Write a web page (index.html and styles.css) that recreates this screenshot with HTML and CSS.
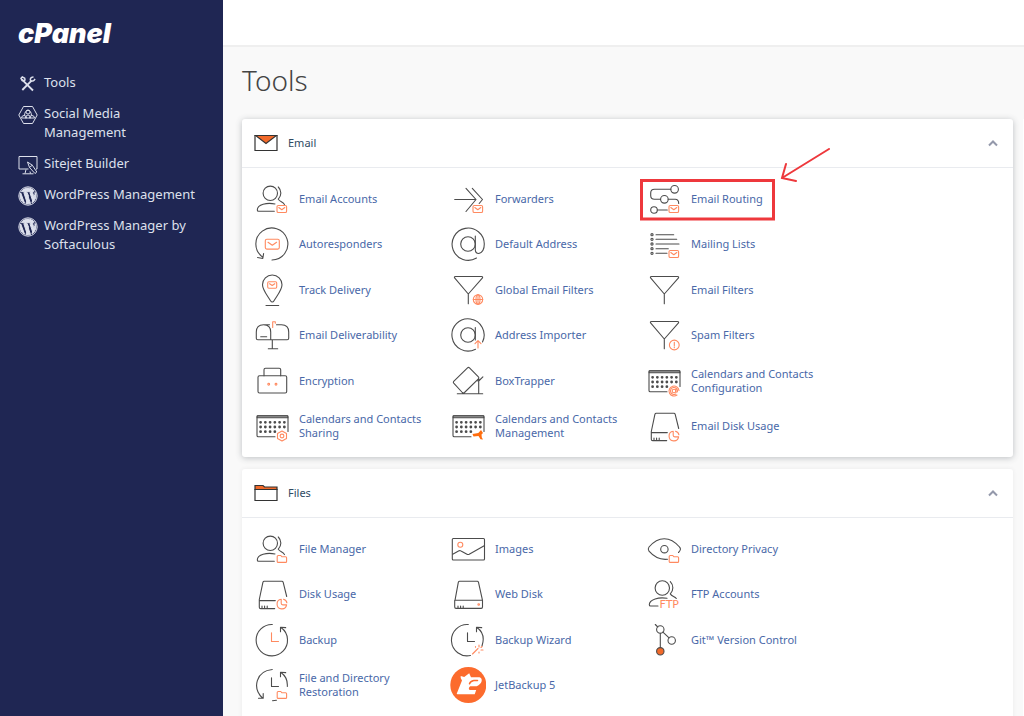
FILE: index.html
```html
<!DOCTYPE html>
<html lang="en">
<head>
<meta charset="utf-8">
<title>cPanel - Tools</title>
<link rel="stylesheet" href="styles.css">
</head>
<body>
<svg class="sprite" aria-hidden="true">
  <symbol id="b-mail" viewBox="0 0 36 36"><g class="accent"><rect x="23" y="24.5" width="9.6" height="7" rx="1.3"/><path d="M24.8 26.5l3 2.2 3-2.2"/></g></symbol>
  <symbol id="b-folder" viewBox="0 0 36 36"><path class="accent" d="M23.2 25.5q0-1 1-1h2.6l1.2 1.3h3.6q1 0 1 1v3.6q0 1-1 1h-7.4q-1 0-1-1z"/></symbol>
  <symbol id="b-pie" viewBox="0 0 36 36"><path class="accent" d="M27.2 23.3a4.8 4.8 0 1 0 5.4 5.6h-3.8q-1.6 0-1.6-1.6zM29.5 23.2q3 .8 3.4 3.6"/></symbol>
  <symbol id="user" viewBox="0 0 36 36"><circle cx="16.3" cy="12.3" r="7.2"/><path d="M24.3 6c3.4 3.5 3.4 8.5 0 12.2c1.6 2.6 5 2.6 6.2 5.4M21 23c-8-1.7-17.7.5-17.7 6q0 1.3 1.3 1.3h15.7"/></symbol>
  <symbol id="funnel" viewBox="0 0 36 36"><path d="M5.5 4.5h26q1.6 0 1 1.4L18.3 22 4.6 5.900q-.7-1.400.9-1.400zM18.300 22v9.800"/></symbol>
  <symbol id="calendar" viewBox="0 0 36 36"><path d="M21 28.7H4.3q-1.3 0-1.3-1.3V9q0-1.3 1.3-1.3h28.4Q34 7.7 34 9v14.5"/><path fill="#999" d="M3.200 7.700h30.600v2H3.200z"/><path class="dots" d="M6.600 14.300h24M6.600 19h24M6.600 23.700h16"/></symbol>
  <symbol id="disk" viewBox="0 0 36 36"><path d="M32.700 20.500L29.200 6.300q-.3-1-1.300-1H10.200q-1 0-1.300 1L5.300 23.500v7.700q0 1.400 1.400 1.400h14M5.300 24.600h16M8 30v2M10.600 30v2M13.200 30v2"/></symbol>
  <symbol id="wp" viewBox="0 0 20 20"><circle cx="10" cy="10" r="9.200" fill="none" stroke="currentColor" stroke-width="1"/><path fill="currentColor" d="M3.300 5.600a8 8 0 0 1 13 -.5c-1.600 0-2 1.800-1 3.400 1 1.700.8 2.700.3 4.300l-.8 2.500-2.900-8.700 1-.1v-.8H8.300v.8l.9.100 1.300 3.500-1.800 5.300L5.800 6.600l1-.1v-.8zM2.700 6.800l3.900 10.500A8 8 0 0 1 2.700 6.800zM10.200 10.900l2.300 6.600a8 8 0 0 1-4.600.2zM17.100 6.300a8 8 0 0 1-3.200 10.500c1.600-4.700 3.400-7.600 3.200-10.500z"/></symbol>
</svg>
<div class="app">
  <aside class="sidebar">
    <a class="logo" href="#">cPanel</a>
    <nav class="nav">
      <a href="#"><svg viewBox="0 0 20 20"><path d="M6.800 8.300L15 16.500M7.300 8.800L3.900 5.400M13.300 6.800L4.300 16" stroke-width="1.900"/><path d="M3 4.300l1.300-1.300 2.400 1.200.3 1.700-1.100 1.100-1.700-.4zM14 7.300q-2-.3-1.600-2.300T15.500 3M13.200 6.700q2.200 1.300 3.800-1.900" stroke-width="1.500"/></svg><span>Tools</span></a>
      <a href="#"><svg viewBox="0 0 20 20"><path d="M5.500 1.500h9l4.700 8.500-4.700 8.500h-9L.8 10z"/><circle cx="10" cy="7" r="2"/><path d="M6.500 10.500q.3-5 3.500-5.200 3.200.2 3.500 5.200M3.500 13q.2-2.500 2.500-2.500T8.500 13zM7.500 13q.2-3 2.500-3t2.500 3zM11.500 13q.2-2.500 2.500-2.500t2.500 2.500z"/></svg><span>Social Media Management</span></a>
      <a href="#"><svg viewBox="0 0 20 20"><path d="M10.500 14H1V1.500h18V14h-1M4.500 18.800h11M7 18.500l1-4M12.500 18.500l-.5-2M9.500 7l2 5.500 5.500 6 1.800-1.500-4.500-6.800zM11.500 12.500l2.800-2.300"/></svg><span>Sitejet Builder</span></a>
      <a href="#"><svg viewBox="0 0 20 20"><use href="#wp"/></svg><span>WordPress Management</span></a>
      <a href="#"><svg viewBox="0 0 20 20"><use href="#wp"/></svg><span>WordPress Manager by Softaculous</span></a>
    </nav>
  </aside>
  <div class="page">
    <header class="topbar"></header>
    <main class="content">
      <h1>Tools</h1>
      <div class="columns">
      <div class="cards">
      <section class="card card-raised">
        <header class="card-head">
          <svg viewBox="0 0 24 18"><path fill="#fff" d="M1 1.500h22v15H1z"/><path fill="#f26a2a" d="M1.500 1.500h21L12 9.500z"/></svg>
          <h2>Email</h2>
          <button type="button" aria-label="Collapse Email"><svg viewBox="0 0 12 8"><path d="M2 6.500l4-4 4 4"/></svg></button>
        </header>
        <div class="tools six-rows">
          <a href="#"><svg viewBox="0 0 36 36"><use href="#user"/><use href="#b-mail"/></svg><span>Email Accounts</span></a>
          <a href="#"><svg viewBox="0 0 36 36"><path d="M4.700 18.500h21.300M16 7.300l10 11.200-10 12M22.300 7.300l10.200 11.200-3.300 4"/><use href="#b-mail"/></svg><span>Forwarders</span></a>
          <a href="#"><svg viewBox="0 0 36 36"><circle cx="28.600" cy="8.300" r="3.800"/><path d="M24.800 8.300H8.500q-3.800 0-3.800 3.800v2.400q0 3.800 3.800 3.800h6M22.200 18.300h7q3.500 0 3.500 4.200M11.400 29h9.900"/><circle cx="18.400" cy="18.300" r="3.800"/><circle cx="8" cy="29" r="3.300"/><use href="#b-mail"/></svg><span>Email Routing</span>
            <svg class="mark" viewBox="0 0 192 74" aria-hidden="true"><rect x="1.500" y="32.500" width="132" height="38.500"/><path class="arrow" d="M189 1L142 30M146 16l-4 14 14 3"/></svg></a>
          <a href="#"><svg viewBox="0 0 36 36"><path d="M18 34A16 16 0 1 0 8.500 31M3.500 31.500l5.300 1 .8-5"/><g class="accent"><rect x="11.300" y="13.300" width="14" height="9.800" rx="1.500"/><path d="M14 16.300l4.300 2.900 4.300-2.900"/></g></svg><span>Autoresponders</span></a>
          <a href="#"><svg viewBox="0 0 36 36"><circle cx="18" cy="18" r="7.300"/><path d="M25.300 10v13.500q0 4 3.500 4 5.500-1.500 5.500-9.500A16.100 16.100 0 1 0 26.500 32"/></svg><span>Default Address</span></a>
          <a href="#"><svg viewBox="0 0 36 36"><path d="M10 8.700h17.700M10 13.300h20.700M10 18h23M10 22.700h12.300M10 27.300h11"/><circle cx="6" cy="8.700" r="1.100"/><circle cx="6" cy="13.300" r="1.100"/><circle cx="6" cy="18" r="1.100"/><circle cx="6" cy="22.700" r="1.100"/><circle cx="6" cy="27.300" r="1.100"/><use href="#b-mail"/></svg><span>Mailing Lists</span></a>
          <a href="#"><svg viewBox="0 0 36 36"><path d="M18.300 30q-1 0-1.800-1.300C12 21.500 8.500 17.500 8.500 12.700a9.700 9.700 0 0 1 19.500 0c0 4.800-3.500 8.800-8 16q-.7 1.300-1.700 1.300zM12 33.500h12.700"/><g class="accent"><rect x="13.700" y="9.800" width="9" height="6.400" rx="1.200"/><path d="M15.600 11.700l2.600 1.800 2.600-1.800"/></g></svg><span>Track Delivery</span></a>
          <a href="#"><svg viewBox="0 0 36 36"><use href="#funnel"/><g class="accent"><circle cx="28" cy="27.500" r="4.700"/><ellipse cx="28" cy="27.500" rx="2" ry="4.700"/><path d="M23.300 27.500h9.400M28 22.800v9.400"/></g></svg><span>Global Email Filters</span></a>
          <a href="#"><svg viewBox="0 0 36 36"><use href="#funnel"/></svg><span>Email Filters</span></a>
          <a href="#"><svg viewBox="0 0 36 36"><path d="M15.500 7.700H9.500Q2.300 7.700 2.300 15v6.200q0 1.500 1.500 1.500h29.400q1.500 0 1.500-1.500V15q0-7.300-7.200-7.300h-5M9.500 7.700q7.200 0 7.200 7.300v7.700M18.300 22.700v9M14.300 31.700h9.400M6.700 19.700h6"/><path class="accent" d="M18.700 10.500V4.700h2.600v1.500"/></svg><span>Email Deliverability</span></a>
          <a href="#"><svg viewBox="0 0 36 36"><circle cx="18" cy="18" r="7.300"/><path d="M25.300 10.500v12.500M32.500 25A16.100 16.100 0 1 0 25.500 32.200"/><path class="accent" d="M28 31v-7M25 26.700l3-3 3 3"/></svg><span>Address Importer</span></a>
          <a href="#"><svg viewBox="0 0 36 36"><use href="#funnel"/><g class="accent"><circle cx="28.300" cy="28" r="4.900"/><path d="M28.300 25.200v3.200M28.300 29.800v1"/></g></svg><span>Spam Filters</span></a>
          <a href="#"><svg viewBox="0 0 36 36"><rect x="4" y="12.800" width="28.700" height="17.200" rx="1.500"/><path d="M10 12.800V6.700q0-1.500 1.500-1.500h13.700q1.500 0 1.500 1.500v6.100"/><g class="accent"><circle cx="14.700" cy="21.200" r=".9"/><circle cx="22" cy="21.200" r=".9"/></g></svg><span>Encryption</span></a>
          <a href="#"><svg viewBox="0 0 36 36"><path d="M12.300 29.500L3.700 20.200q-.8-1 0-1.900L17.500 4.900q1-1 2 0l8.900 9q1 1 0 2L14.500 29.500q-1.100 1-2.200 0zM26.500 17.500l2.200.5 4.200-4.200M28.700 16v14.500M7.300 30.700h25.400"/></svg><span>BoxTrapper</span></a>
          <a href="#"><svg viewBox="0 0 36 36"><use href="#calendar"/><g class="accent"><circle cx="28" cy="28" r="1.800"/><path d="M29.800 26.300v2.600q1.600 1 1.700-1A3.500 3.500 0 1 0 29.800 31M31 32a5 5 0 1 1 2-4.500"/></g></svg><span>Calendars and Contacts Configuration</span></a>
          <a href="#"><svg viewBox="0 0 36 36"><use href="#calendar"/><g class="accent"><path d="M28 23l4.500 2.500v5L28 33l-4.500-2.500v-5z"/><circle cx="28" cy="28" r="1.900"/></g></svg><span>Calendars and Contacts Sharing</span></a>
          <a href="#"><svg viewBox="0 0 36 36"><use href="#calendar"/><path class="solid" d="M22.500 26l5.800-1 2.700-3 2 3-1.500 1.500.3 3 1.200 2-2.500-.3-2-3.200-5 .5z"/></svg><span>Calendars and Contacts Management</span></a>
          <a href="#"><svg viewBox="0 0 36 36"><use href="#disk"/><use href="#b-pie"/></svg><span>Email Disk Usage</span></a>
        </div>
      </section>
      <section class="card">
        <header class="card-head">
          <svg viewBox="0 0 24 18"><path fill="#f26a2a" d="M1 5.500V1.500h8l1.500 1.500H23v2.500z"/><path fill="#fff" d="M1 5.500h22v11H1z"/></svg>
          <h2>Files</h2>
          <button type="button" aria-label="Collapse Files"><svg viewBox="0 0 12 8"><path d="M2 6.500l4-4 4 4"/></svg></button>
        </header>
        <div class="tools four-rows">
          <a href="#"><svg viewBox="0 0 36 36"><use href="#user"/><use href="#b-folder"/></svg><span>File Manager</span></a>
          <a href="#"><svg viewBox="0 0 36 36"><rect x="2.300" y="7.500" width="32.200" height="21.500" rx="1"/><path d="M2.700 23.200l6.300-3.400q1-.5 2 .1l6 3.300q1 .6 2.200 0l15-8.500"/><circle class="accent" cx="10.300" cy="13.800" r="2.500"/></svg><span>Images</span></a>
          <a href="#"><svg viewBox="0 0 36 36"><path d="M32.500 21.500q3.300-3.200 1-5.500C24 5 12.500 5 3 16q-1.500 2 0 4.200C8 26 14 29 21.500 28.200"/><circle cx="18.400" cy="18.200" r="3.700"/><use href="#b-folder"/></svg><span>Directory Privacy</span></a>
          <a href="#"><svg viewBox="0 0 36 36"><use href="#disk"/><use href="#b-pie"/></svg><span>Disk Usage</span></a>
          <a href="#"><svg viewBox="0 0 36 36"><path d="M5 24.300L8.300 6.300q.3-1 1.300-1h17.600q1 0 1.300 1L32.500 24.300v6.800q0 1.300-1.300 1.300H6q-1.300 0-1.300-1.300v-6.800h27.800M8 30v2M10.600 30v2M13.200 30v2"/><circle class="accent" cx="28.700" cy="28.500" r=".8"/></svg><span>Web Disk</span></a>
          <a href="#"><svg viewBox="0 0 36 36"><circle cx="16.300" cy="12" r="7.200"/><path d="M24.300 5.700c3.400 3.500 3.400 8.500 0 12.200 1.500 2.500 4.500 2.500 6 4.600M21 22.300c-8-1.500-17.700 1-17.700 6.400q0 1.300 1.300 1.300h7.400"/><text class="ftp" x="13.500" y="32">FTP</text></svg><span>FTP Accounts</span></a>
          <a href="#"><svg viewBox="0 0 36 36"><path d="M18.300 2.500A15.700 15.700 0 1 0 33.500 17.500Q33.300 10 27 5.500M26.500 9.800V5.200l5.200.4"/><path class="accent" d="M17.500 10.800v8.700h7"/></svg><span>Backup</span></a>
          <a href="#"><svg viewBox="0 0 36 36"><path d="M18.300 2.500A15.700 15.700 0 1 0 20.500 33.500M32 24Q36 12 27 5.500M26.500 9.800V5.200l5.200.4M17.500 10.800v8.700h7"/><path class="accent" d="M22.500 32l5.500-5.500M25.500 24.500v.8M29 23v2M32 24.500l-1 1M31 28h2M29 30v1"/></svg><span>Backup Wizard</span></a>
          <a href="#"><svg viewBox="0 0 36 36"><path d="M9.300 2.500l2.500 2.500M14.300 11.200v14.600M16.900 10.100l6.200 5.800"/><circle cx="14.300" cy="7.500" r="3.700"/><circle cx="25.700" cy="18.500" r="3.700"/><circle cx="14.300" cy="29.300" r="3.700" fill="#f26a2a"/></svg><span>Git™ Version Control</span></a>
          <a href="#"><svg viewBox="0 0 36 36"><path d="M18.300 2.500C2 4 -2 21 8.500 31M4.500 31.200h4.700v-4.700M27 5.500q7 5 6.300 14M26.500 9.800V5.200l5.200.4M17.500 10.800v8.700h7M18.500 33.800l4-.5"/><use href="#b-folder"/></svg><span>File and Directory Restoration</span></a>
          <a href="#"><svg viewBox="0 0 36 36"><circle cx="18.300" cy="18" r="18" fill="#fc6b2d" stroke="none"/><path fill="#fff" stroke="none" d="M6.800 26.500L12 13.500q-2-1.800-1.300-4.500l3.500 1 5-3.700 1.800 4h8.500q2.500.7 2.200 3.700-1 3.500-5 5.300h-6.500q-2.500 2.200-.5 3.700h6.500l-1.500 4.300H7.500q-1 0-.7-.8z"/><path fill="none" stroke="#fc6b2d" stroke-width="1.500" d="M27.500 13.500h-3.700q-3.300.5-4.300 3.300"/></svg><span>JetBackup 5</span></a>
        </div>
      </section>
      </div>
      <aside class="rail"></aside>
      </div>
    </main>
  </div>
</div>
</body>
</html>
```
FILE: styles.css
```css
* { box-sizing: border-box; }
body {
  margin: 0;
  font-family: "Noto Sans", "Open Sans", sans-serif;
  font-size: 11px;
  background: #f9f9f9;
  overflow: hidden;
}
a { color: inherit; text-decoration: none; }
.sprite { display: none; }
.app { display: flex; height: 100vh; }

.sidebar {
  flex: 0 0 223px;
  padding: 18px 22px 0 18px;
  background: #1f2653;
  color: #dde0ec;
}
.logo {
  display: block;
  font: italic 900 27px/32px Inter, sans-serif;
  color: #fff;
}
.nav {
  display: flex;
  flex-direction: column;
  gap: 12px;
  margin-top: 23px;
  font-size: 13px;
  line-height: 19px;
}
.nav a { display: flex; gap: 6px; }
.nav svg {
  flex: none;
  width: 20px;
  height: 20px;
  margin: 1px 0 -2px;
  fill: none;
  stroke: currentColor;
}

.page { flex: 1; min-width: 0; }
.topbar {
  height: 47px;
  background: #fff;
  border-bottom: 2px solid #efefef;
}
.content { padding: 12px 0 0 19px; }
h1 {
  margin: 0 0 18px;
  font-size: 28px;
  font-weight: 300;
  line-height: 42px;
  color: #444;
}
.columns { display: flex; gap: 10px; }
.cards {
  flex: 1;
  display: flex;
  flex-direction: column;
  gap: 12px;
}
.rail { flex: 0 0 1px; background: #fff; }
.card {
  background: #fff;
  border-radius: 3px;
  box-shadow: 0 0 4px rgba(60, 70, 80, .08);
}
.card-raised { box-shadow: 0 1px 6px rgba(50, 60, 70, .3); }
.card-head {
  display: flex;
  align-items: center;
  height: 49px;
  padding: 0 14px 0 12px;
  border-bottom: 1px solid #e9ebef;
}
.card-head > svg {
  width: 24px;
  height: 18px;
  stroke: #333;
  stroke-width: 1.2;
}
h2 {
  flex: 1;
  margin: 0 0 2px 10px;
  font-size: 11px;
  font-weight: 400;
  color: #2f4a63;
}
.card-head button {
  display: flex;
  padding: 0;
  border: 0;
  background: none;
}
.card-head button svg {
  width: 12px;
  height: 8px;
  fill: none;
  stroke: #9499ab;
  stroke-width: 2;
}
.tools {
  display: grid;
  grid-template-columns: repeat(auto-fill, 196px);
  grid-auto-rows: 1fr;
  padding: 8px 0 8px 12px;
}
.six-rows { min-height: 289px; }
.four-rows { min-height: 210px; padding-bottom: 20px; }
.tools a {
  position: relative;
  display: flex;
  align-items: center;
  gap: 9px;
  padding-right: 20px;
  line-height: 14px;
  color: #4968a8;
}
.tools svg {
  flex: none;
  width: 36px;
  height: 36px;
  fill: none;
  stroke: #4c4c4c;
  stroke-width: 1.1;
  stroke-linecap: round;
  stroke-linejoin: round;
}
.accent { stroke: #ff8a60; }
.solid { fill: #ff6c0c; stroke: none; }
.dots { stroke-width: 2.8; stroke-dasharray: 0 4.75; }
.ftp {
  font: 11px "DejaVu Sans", sans-serif;
  fill: #ff8a60;
  stroke: none;
}
.tools .mark {
  position: absolute;
  left: -6px;
  top: -28px;
  width: 192px;
  height: 74px;
  stroke: #ee383c;
  stroke-width: 3;
  stroke-linejoin: miter;
  pointer-events: none;
}
.mark .arrow { stroke-width: 2; }
```
